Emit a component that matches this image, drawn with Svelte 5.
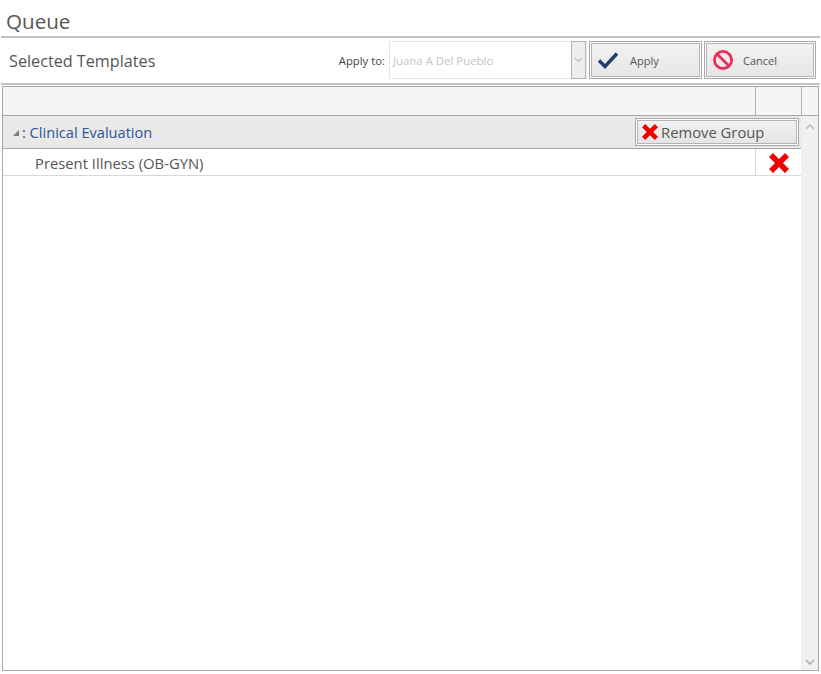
<script>
  const cross = "M0 4 L4 0 L10 6 L16 0 L20 4 L14 10 L20 16 L16 20 L10 14 L4 20 L0 16 L6 10 Z";
</script>

<div class="page">
  <h1 class="title">Queue</h1>
  <div class="toolbar">
    <span class="subtitle">Selected Templates</span>
    <div class="actions">
      <span class="apply-label">Apply to:</span>
      <div class="combo">
        <span class="combo-text">Juana A Del Pueblo</span>
        <span class="combo-arrow">
          <svg width="9" height="6" viewBox="0 0 9 6"><path d="M1 1 L4.5 4.5 L8 1" fill="none" stroke="#c4c4c4" stroke-width="1.5"/></svg>
        </span>
      </div>
      <button class="btn btn-apply">
        <svg class="btn-icon" width="22" height="18" viewBox="0 0 22 18"><path d="M2 9.5 L8 15.5 L20 2.5" fill="none" stroke="#1c3f6e" stroke-width="3.4"/></svg>
        <span class="btn-text apply">Apply</span>
      </button>
      <button class="btn btn-cancel">
        <svg class="btn-icon" width="22" height="22" viewBox="0 0 22 22"><circle cx="11" cy="11" r="8.6" fill="none" stroke="#ee2c5c" stroke-width="2.8"/><path d="M5 5 L17 17" stroke="#ee2c5c" stroke-width="2.8"/></svg>
        <span class="btn-text cancel">Cancel</span>
      </button>
    </div>
  </div>
  <div class="grid">
    <div class="grid-head">
      <div class="head-main"></div>
      <div class="head-cell"></div>
      <div class="head-end"></div>
    </div>
    <div class="grid-body">
      <div class="rows">
        <div class="group">
          <span class="tri"></span>
          <span class="group-label">: Clinical Evaluation</span>
          <button class="remove-group">
            <svg width="16" height="16" viewBox="0 0 20 20"><path d={cross} fill="#f00000"/></svg>
            <span>Remove Group</span>
          </button>
        </div>
        <div class="row">
          <div class="row-name">Present Illness (OB-GYN)</div>
          <div class="row-action">
            <svg width="20" height="20" viewBox="0 0 20 20"><path d={cross} fill="#f00000"/></svg>
          </div>
        </div>
      </div>
      <div class="scrollbar">
        <svg width="10" height="6" viewBox="0 0 10 6"><path d="M1 5 L5 1 L9 5" fill="none" stroke="#bdbdbd" stroke-width="1.6"/></svg>
        <svg width="10" height="6" viewBox="0 0 10 6"><path d="M1 1 L5 5 L9 1" fill="none" stroke="#b0b0b0" stroke-width="1.6"/></svg>
      </div>
    </div>
  </div>
</div>

<style>
  :global(body) { margin: 0; background: #fff; }
  .page {
    width: 821px;
    height: 674px;
    box-sizing: border-box;
    padding: 0 1px 0 1px;
    display: flex;
    flex-direction: column;
    font-family: "Open Sans", "Noto Sans", sans-serif;
    color: #555;
    overflow: hidden;
  }
  .title {
    margin: 0;
    height: 36px;
    padding-left: 5px;
    font-size: 20.6px;
    font-weight: 400;
    line-height: 42px;
    color: #555;
    border-bottom: 2px solid #c4c4c4;
    flex: none;
  }
  .toolbar {
    height: 43px;
    padding-bottom: 2px;
    display: flex;
    align-items: center;
    justify-content: space-between;
    border-bottom: 2px solid #c4c4c4;
    flex: none;
  }
  .subtitle { font-size: 16.2px; padding: 3px 0 0 8px; color: #555; }
  .actions { display: flex; align-items: center; padding-right: 4px; }
  .apply-label { font-size: 11.3px; color: #444; margin-right: 4px; padding-top: 2px; }
  .combo {
    width: 198px;
    height: 38px;
    box-sizing: border-box;
    border: 1px solid #e2e2e2;
    display: flex;
    justify-content: space-between;
    margin-right: 2px;
  }
  .combo-text { font-size: 11.4px; color: #c4c4c4; line-height: 38px; padding-left: 3px; }
  .combo-arrow {
    width: 15px;
    box-sizing: border-box;
    margin-top: -1px;
    margin-bottom: -1px;
    border: 1px solid #b4b4b4;
    background: #eee;
    display: flex;
    align-items: center;
    justify-content: center;
  }
  .btn {
    height: 38px;
    box-sizing: border-box;
    padding: 0 0 0 7px;
    border: 1px solid #a8a8a8;
    box-shadow: inset 0 0 0 1px #fff, inset 0 0 0 2px #b4b4b4;
    background: linear-gradient(#f2f2f2, #e6e6e6);
    display: flex;
    align-items: center;
    font-family: inherit;
  }
  .btn-apply { width: 113px; margin-right: 2px; }
  .btn-cancel { width: 112px; }
  .btn-text { font-size: 11px; color: #555; padding-top: 2px; }
  .btn-text.apply { margin-left: 11px; }
  .btn-text.cancel { margin-left: 9px; }
  .grid {
    margin: 1px 1px 3px 1px;
    flex: 1;
    border: 1px solid #a8a8a8;
    display: flex;
    flex-direction: column;
    min-height: 0;
  }
  .grid-head {
    height: 28px;
    display: flex;
    background: #f5f5f5;
    border-bottom: 1px solid #a8a8a8;
    flex: none;
  }
  .head-main { flex: 1; }
  .head-cell { width: 46px; box-sizing: border-box; border-left: 1px solid #b4b4b4; }
  .head-end { width: 17px; box-sizing: border-box; border-left: 1px solid #b4b4b4; }
  .grid-body { flex: 1; display: flex; min-height: 0; }
  .rows { flex: 1; min-width: 0; }
  .group {
    height: 32px;
    background: #e9e9e9;
    border-bottom: 1px solid #a8a8a8;
    display: flex;
    align-items: center;
    padding-left: 10px;
  }
  .tri {
    width: 0;
    height: 0;
    border-left: 6px solid transparent;
    border-bottom: 6px solid #7c7c7c;
    margin-right: 3px;
    margin-top: 2px;
  }
  .group-label { font-size: 14.6px; color: #2f5596; flex: 1; }
  .remove-group {
    width: 164px;
    height: 28px;
    box-sizing: border-box;
    margin-right: 2px;
    padding: 0 0 0 6px;
    border: 1px solid #a8a8a8;
    box-shadow: inset 0 0 0 1px #fff, inset 0 0 0 2px #b4b4b4;
    background: linear-gradient(#f2f2f2, #e4e4e4);
    display: flex;
    align-items: center;
    gap: 3px;
    font-family: inherit;
    font-size: 14.8px;
    color: #555;
  }
  .row {
    height: 26px;
    display: flex;
    border-bottom: 1px solid #d8d8d8;
    align-items: stretch;
  }
  .row-name { flex: 1; font-size: 14.8px; line-height: 28px; padding-left: 32px; color: #555; }
  .row-action {
    width: 46px;
    box-sizing: border-box;
    padding-top: 1px;
    border-left: 1px solid #d8d8d8;
    display: flex;
    align-items: center;
    justify-content: center;
  }
  .scrollbar {
    width: 17px;
    background: #f0f0f0;
    display: flex;
    flex-direction: column;
    justify-content: space-between;
    align-items: center;
    padding: 8px 0 5px;
    box-sizing: border-box;
    flex: none;
  }
</style>
